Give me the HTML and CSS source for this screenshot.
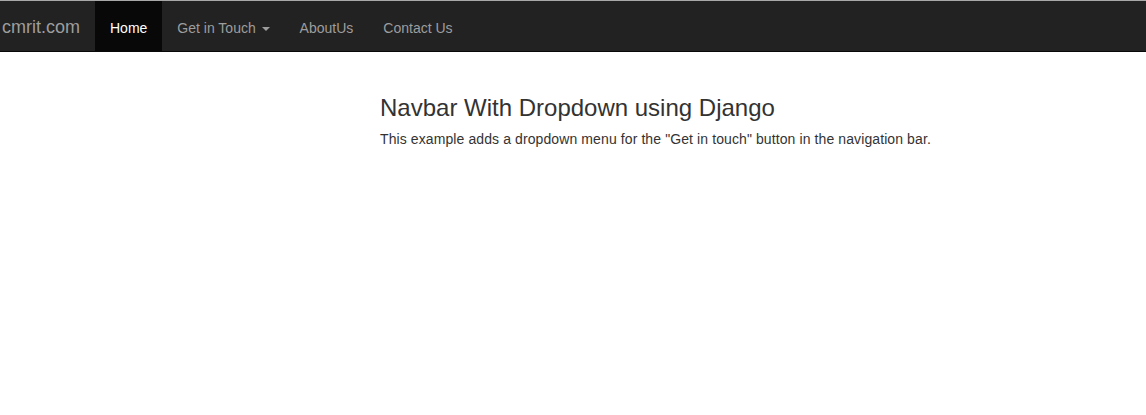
FILE: index.html
```html
<!DOCTYPE html>
<html>
<head>
<meta charset="utf-8">
<link rel="stylesheet" href="styles.css">
</head>
<body>
<nav class="navbar">
  <a class="brand" href="#">cmrit.com</a>
  <ul class="nav">
    <li class="active"><a href="#">Home</a></li>
    <li><a href="#">Get in Touch <span class="caret"></span></a></li>
    <li><a href="#">AboutUs</a></li>
    <li><a href="#">Contact Us</a></li>
  </ul>
</nav>
<main class="content">
  <h3 class="title">Navbar With Dropdown using Django</h3>
  <p class="lead">This example adds a dropdown menu for the "Get in touch" button in the navigation bar.</p>
</main>
</body>
</html>
```
FILE: styles.css
```css
* { box-sizing: border-box; }
body {
  margin: 0;
  font-family: "Liberation Sans", Arial, sans-serif;
  font-size: 14px;
  line-height: 20px;
  color: #333;
  background: #fff;
}
.navbar {
  display: flex;
  align-items: stretch;
  height: 52px;
  background: #222;
  border-top: 1px solid #a8a8a8;
  border-bottom: 1px solid #080808;
}
.brand {
  display: block;
  padding: 16px 15px 14px 2px;
  font-size: 18px;
  line-height: 20px;
  color: #9d9d9d;
  text-decoration: none;
}
.nav {
  display: flex;
  margin: 0;
  padding: 0;
  list-style: none;
}
.nav a {
  display: block;
  padding: 17px 15px 13px;
  line-height: 20px;
  color: #9d9d9d;
  text-decoration: none;
}
.nav .active a {
  background: #080808;
  color: #fff;
}
.caret {
  display: inline-block;
  width: 0;
  height: 0;
  margin-left: 2px;
  vertical-align: middle;
  border-top: 4px solid;
  border-right: 4px solid transparent;
  border-left: 4px solid transparent;
}
.content {
  padding-left: 380px;
  padding-top: 23px;
}
.title {
  margin: 20px 0 8px;
  font-size: 24px;
  font-weight: 500;
  line-height: 26.4px;
}
.lead {
  margin: 0;
  letter-spacing: 0.1px;
}
```
